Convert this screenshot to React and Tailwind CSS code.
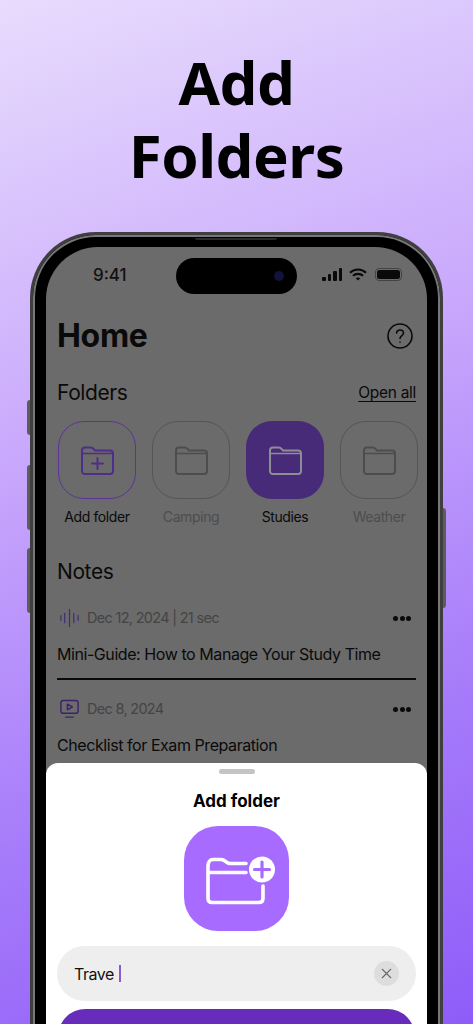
const Folder = ({ className = "", plus = false }) => (
  <svg viewBox="0 0 34 30" fill="none" stroke="currentColor" strokeWidth="2" strokeLinejoin="round" className={className}>
    <path d="M2 5.5C2 3.5 3 2.5 5 2.5H10.5C12 2.5 12.8 3 13.8 4.2L15 5.6H30C31.7 5.6 33 6.7 33 8.5V26C33 27.8 31.8 29 30 29H5C3.2 29 2 27.8 2 26Z" />
    <path d="M2 8.5H33" strokeWidth="1.6" />
    {plus && <path d="M17.5 13V24M12 18.5H23" strokeLinecap="round" />}
  </svg>
);

const FolderTile = ({ label, tile, icon, text, plus }) => (
  <div className="flex w-[78px] shrink-0 flex-col items-center">
    <div className={`flex h-[78px] w-[78px] items-center justify-center rounded-[26px] ${tile}`}>
      <Folder plus={plus} className={`h-[30px] w-[34px] ${icon}`} />
    </div>
    <span className={`mt-[9px] whitespace-nowrap text-[14px] leading-[18px] tracking-[-0.4px] ${text}`}>{label}</span>
  </div>
);

const Dots = () => (
  <div className="mr-[5px] flex gap-[1.5px]">
    <span className="h-[5px] w-[5px] rounded-full bg-[#0a0a0a]" />
    <span className="h-[5px] w-[5px] rounded-full bg-[#0a0a0a]" />
    <span className="h-[5px] w-[5px] rounded-full bg-[#0a0a0a]" />
  </div>
);

const NoteRow = ({ icon, meta, title }) => (
  <div>
    <div className="flex h-[24px] items-center justify-between">
      <div className="flex items-center gap-[7px]">
        {icon}
        <span className="text-[14.5px] tracking-[-0.7px] text-[#444444]">{meta}</span>
      </div>
      <Dots />
    </div>
    <p className="mt-[12px] text-[16px] leading-[24px] tracking-[-0.43px] text-[#0a0a0a]">{title}</p>
  </div>
);

const WaveIcon = () => (
  <svg viewBox="0 0 22 20" className="ml-[2px] h-[20px] w-[21px] text-[#3f2a7b]" stroke="currentColor" strokeWidth="1.2" strokeLinecap="round">
    <path d="M2 7.5V12.5M6 5V15M11 1V19M15.5 5V15M20 7.5V12.5" />
  </svg>
);

const VideoIcon = () => (
  <svg viewBox="0 0 22 20" fill="none" className="ml-[2px] h-[20px] w-[21px] text-[#3f2169]" stroke="currentColor" strokeWidth="1.5" strokeLinejoin="round" strokeLinecap="round">
    <rect x="2" y="1" width="18" height="13.5" rx="2.5" />
    <path d="M8.8 4.8V10.8L14 7.8Z" />
    <path d="M7 18.5H15" />
  </svg>
);

const WifiGlyph = () => (
  <svg viewBox="0 0 18 13" fill="none" stroke="#0a0a0a" strokeWidth="2.2" className="h-[13px] w-[18px]">
    <path d="M1 4.8C5.5 0.4 12.5 0.4 17 4.8" />
    <path d="M4 7.8C6.8 5.2 11.2 5.2 14 7.8" />
    <path d="M9 12.6L6.7 10.3C8 9.2 10 9.2 11.3 10.3Z" fill="#0a0a0a" stroke="none" />
  </svg>
);

export default function App() {
  return (
    <div className="h-[1024px] w-[473px] overflow-hidden bg-[linear-gradient(160deg,#e8dcfd_0%,#c9a9fc_38%,#a67bfa_72%,#8f5cf9_100%)] font-['Inter',sans-serif]">
      {/* HEADLINE */}
      <h1 className="pt-[46px] text-center font-['Noto_Sans',sans-serif] text-[60px] font-bold leading-[73px] tracking-[-0.5px] text-black">
        Add
        <br />
        Folders
      </h1>

      {/* PHONE */}
      <div className="relative mx-[30px] mt-[40px] h-[900px] rounded-t-[66px] border-[3px] border-b-0 border-[#3f3f3f] bg-black p-[1px] shadow-[inset_0_0_0_2px_#77777a]">
        {/* side buttons, speaker */}
        <span className="absolute left-[-6px] top-[165px] h-[35px] w-[3px] rounded-l-sm bg-[#5c5c5c]" />
        <span className="absolute left-[-6px] top-[230px] h-[65px] w-[3px] rounded-l-sm bg-[#5c5c5c]" />
        <span className="absolute left-[-6px] top-[313px] h-[65px] w-[3px] rounded-l-sm bg-[#5c5c5c]" />
        <span className="absolute right-[-6px] top-[273px] h-[100px] w-[3px] rounded-r-sm bg-[#5c5c5c]" />
        <span className="absolute left-[162px] top-[3px] h-[2px] w-[82px] rounded-b-sm bg-[#2a2a2a]" />

        <div className="relative mx-[12px] mt-[11px] h-[880px] overflow-hidden rounded-t-[52px] bg-[#6b6b6b] text-[#0a0a0a]">
          {/* STATUS BAR */}
          <div className="relative flex h-[55px] items-center justify-between pl-[47px] pr-[25px]">
            <span className="mt-[2px] text-[17px] font-medium text-[#111111]">9:41</span>
            <div className="absolute left-[130px] top-[11px] flex h-[36px] w-[121px] items-center justify-end rounded-full bg-black pr-[13px]">
              <span className="h-[10px] w-[10px] rounded-full bg-[#12123a]" />
            </div>
            <div className="flex items-center gap-[7px]">
              <div className="flex items-end gap-[2px]">
                <span className="h-[4px] w-[3.5px] rounded-[1px] bg-[#0a0a0a]" />
                <span className="h-[7px] w-[3.5px] rounded-[1px] bg-[#0a0a0a]" />
                <span className="h-[10px] w-[3.5px] rounded-[1px] bg-[#0a0a0a]" />
                <span className="h-[13px] w-[3.5px] rounded-[1px] bg-[#0a0a0a]" />
              </div>
              <WifiGlyph />
              <div className="ml-[1px] flex h-[13px] w-[27px] items-center rounded-[4px] border border-[#444444] p-[1px]">
                <span className="h-full w-full rounded-[2.5px] bg-[#0a0a0a]" />
              </div>
            </div>
          </div>

          {/* CONTENT */}
          <div className="px-[11px]">
            <div className="mt-[14px] flex h-[40px] items-center justify-between">
              <h2 className="text-[32px] font-bold tracking-[-0.3px]">Home</h2>
              <svg viewBox="0 0 26 26" fill="none" stroke="currentColor" strokeWidth="1.6" strokeLinecap="round" className="mr-[3px] h-[26px] w-[26px]">
                <circle cx="13" cy="13" r="12" />
                <path d="M9.6 10C9.8 8 11.2 7 13 7C15 7 16.5 8.3 16.5 10C16.5 12.5 13 12.6 13 15.5" />
                <path d="M13 19V19.1" />
              </svg>
            </div>

            <div className="mt-[24px] flex h-[26px] items-center justify-between">
              <h3 className="text-[21px] tracking-[-0.4px]">Folders</h3>
              <a className="text-[15.5px] leading-[20px] tracking-[-0.3px] underline underline-offset-[3px]">Open all</a>
            </div>

            <div className="ml-[1px] mt-[15px] flex gap-[16px]">
              <FolderTile label="Add folder" plus tile="border-[1.5px] border-[#5b3596]" icon="text-[#4f2d8c]" text="text-[#0a0a0a]" />
              <FolderTile label="Camping" tile="border-[1.5px] border-[#555555]" icon="text-[#4d4d4d]" text="text-[#4d4d4d]" />
              <FolderTile label="Studies" tile="bg-[#472b78]" icon="text-[#8d8d94]" text="text-[#0a0a0a]" />
              <FolderTile label="Weather" tile="border-[1.5px] border-[#555555]" icon="text-[#4d4d4d]" text="text-[#4d4d4d]" />
            </div>

            <h3 className="mt-[33px] text-[21px] leading-[26px] tracking-[-0.4px]">Notes</h3>

            <div className="mt-[21px] border-b-[2px] border-[#0a0a0a] pb-[12px]">
              <NoteRow icon={<WaveIcon />} meta="Dec 12, 2024 | 21 sec" title="Mini-Guide: How to Manage Your Study Time" />
            </div>
            <div className="mt-[17px]">
              <NoteRow icon={<VideoIcon />} meta="Dec 8, 2024" title="Checklist for Exam Preparation" />
            </div>
          </div>

          {/* BOTTOM SHEET */}
          <div className="absolute inset-x-0 top-[516px] flex h-[400px] flex-col items-center rounded-t-[12px] bg-white px-[11px]">
            <span className="mt-[6px] h-[5px] w-[36px] rounded-full bg-[#c4c4c4]" />
            <h4 className="mt-[16px] text-[17px] font-bold leading-[22px] text-black">Add folder</h4>
            <div className="mt-[14px] flex h-[105px] w-[105px] items-center justify-center rounded-[34px] bg-[#a76bff]">
              <svg viewBox="0 0 70 50" fill="none" className="ml-[1px] h-[50px] w-[70px] overflow-visible">
                <path
                  d="M6 12C6 8 8 5.5 11 5.5H19C22 5.5 23 7 25 8.5C26 9.5 27 9.5 29 9.5H44M6 18.5H44M6 12V44C6 47 7.5 48.5 10 48.5H57C59.5 48.5 61 47 61 44V32"
                  stroke="white"
                  strokeWidth="3.6"
                  strokeLinecap="round"
                  strokeLinejoin="round"
                />
                <circle cx="60" cy="15.5" r="13" fill="white" />
                <path d="M60 8V23M52.5 15.5H67.5" stroke="#a76bff" strokeWidth="3.2" strokeLinecap="round" />
              </svg>
            </div>
            <div className="mt-[15px] flex h-[55px] w-full items-center justify-between rounded-full bg-[#eeeeee] px-[17px]">
              <div className="flex items-center gap-[5px] text-[16px] tracking-[-0.5px] text-[#111111]">
                <span>Trave</span>
                <span className="h-[17px] w-[2px] bg-[#8a5ad0]" />
              </div>
              <div className="flex h-[25px] w-[25px] items-center justify-center rounded-full bg-[#dddddd]">
                <svg viewBox="0 0 12 12" className="h-[11px] w-[11px]" stroke="#666666" strokeWidth="1.5" strokeLinecap="round">
                  <path d="M1.5 1.5L10.5 10.5M10.5 1.5L1.5 10.5" />
                </svg>
              </div>
            </div>
            <div className="mt-[8px] h-[55px] w-[357px] rounded-full bg-[#672cbc]" />
          </div>
        </div>
      </div>
    </div>
  );
}
